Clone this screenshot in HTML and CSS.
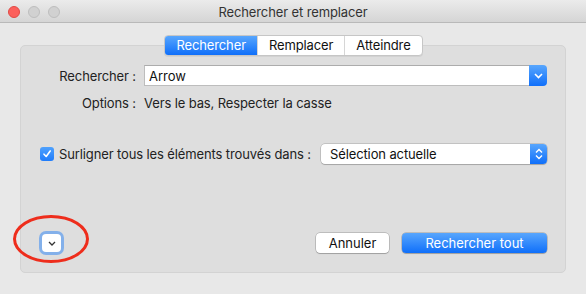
FILE: index.html
```html
<!DOCTYPE html>
<html lang="fr">
<head>
    <meta charset="UTF-8">
    <title>Rechercher et remplacer</title>
    <link rel="stylesheet" href="styles.css">
</head>
<body>
    <div class="window">
        <header class="titlebar">
            <div class="lights">
                <span class="light close"></span>
                <span class="light"></span>
                <span class="light"></span>
            </div>
            <div class="title">Rechercher et remplacer</div>
        </header>

        <section class="panel">
            <div class="tabs">
                <span class="tab active">Rechercher</span><span class="tab">Remplacer</span><span class="tab">Atteindre</span>
            </div>

            <div class="field">
                <span class="label">Rechercher :</span>
                <div class="combo">
                    <input class="combo-input" type="text" value="Arrow">
                    <span class="combo-btn">
                        <svg width="9" height="6" viewBox="0 0 9 6"><path d="M1 1l3.5 3.5L8 1" fill="none" stroke="#fff" stroke-width="1.6"/></svg>
                    </span>
                </div>
            </div>

            <div class="field options">
                <span class="label">Options :</span>
                <span class="value">Vers le bas, Respecter la casse</span>
            </div>

            <div class="highlight">
                <label class="check">
                    <span class="box">
                        <svg width="10" height="10" viewBox="0 0 10 10"><path d="M2 5.2l2.2 2.3L8.2 2" fill="none" stroke="#fff" stroke-width="1.6" stroke-linecap="round" stroke-linejoin="round"/></svg>
                    </span>
                    Surligner tous les éléments trouvés dans :
                </label>
                <div class="select">
                    <span>Sélection actuelle</span>
                    <span class="stepper">
                        <svg width="8" height="12" viewBox="0 0 8 12"><path d="M1 4.5l3-3 3 3M1 7.5l3 3 3-3" fill="none" stroke="#fff" stroke-width="1.4"/></svg>
                    </span>
                </div>
            </div>

            <div class="footer">
                <button class="disclosure">
                    <svg width="8" height="5" viewBox="0 0 8 5"><path d="M1 1l3 3 3-3" fill="none" stroke="#333" stroke-width="1.3"/></svg>
                </button>
                <span class="callout"></span>
                <div class="actions">
                    <button class="btn">Annuler</button>
                    <button class="btn primary">Rechercher tout</button>
                </div>
            </div>
        </section>
    </div>
</body>
</html>
```

FILE: styles.css
```css
:root {
    --text: #222;
    --blue-top: #58a6fd;
    --blue-bottom: #0f6ffa;
    --window: #e8e8e8;
    --panel: #dedede;
}

* {
    margin: 0;
    padding: 0;
    box-sizing: border-box;
}

body {
    font-family: 'Inter', 'Liberation Sans', sans-serif;
    font-size: 13px;
    letter-spacing: -0.12px;
    color: var(--text);
    background: var(--window);
    width: 586px;
    height: 294px;
    overflow: hidden;
}

.window {
    height: 294px;
    background: var(--window);
}

.titlebar {
    position: relative;
    height: 23px;
    background: linear-gradient(#ebebeb, #d5d5d5);
    border-bottom: 1px solid #b9b9b9;
    display: flex;
    align-items: center;
    justify-content: center;
}

.lights {
    position: absolute;
    left: 8px;
    top: 6px;
    display: flex;
    gap: 8px;
}

.light {
    width: 12px;
    height: 12px;
    border-radius: 50%;
    background: #d1d1d1;
    border: 1px solid #bebebe;
}

.light.close {
    background: #fc605c;
    border-color: #e04a45;
}

.title {
    color: #333;
    padding-top: 1px;
}

.panel {
    margin: 22px 20px 0;
    height: 228px;
    background: var(--panel);
    border: 1px solid #d3d3d3;
    border-radius: 5px;
    padding: 0 18px 19px 19px;
    display: flex;
    flex-direction: column;
}

.tabs {
    align-self: center;
    margin-top: -11px;
    display: flex;
    height: 21px;
    background: #fff;
    border: 1px solid #c6c6c6;
    border-radius: 4px;
    box-shadow: 0 1px 0 rgba(0, 0, 0, 0.05);
    overflow: hidden;
}

.tab {
    padding: 0 11px;
    line-height: 19px;
    color: #111;
    border-left: 1px solid #d6d6d6;
}

.tab:first-child {
    border-left: none;
}

.tab.active {
    background: linear-gradient(var(--blue-top), var(--blue-bottom));
    color: #fff;
}

.field {
    display: flex;
    align-items: center;
    gap: 8px;
    margin-top: 9px;
}

.label {
    width: 96px;
    text-align: right;
}

.combo {
    flex: 1;
    display: flex;
    height: 21px;
}

.combo-input {
    flex: 1;
    border: 1px solid #bdbdbd;
    border-top-color: #acacac;
    border-right: none;
    background: #fff;
    font: inherit;
    color: #111;
    padding: 0 4px;
    outline: none;
}

.combo-btn {
    width: 18px;
    display: flex;
    align-items: center;
    justify-content: center;
    background: linear-gradient(var(--blue-top), var(--blue-bottom));
    border-radius: 0 4px 4px 0;
}

.options {
    margin-top: 9px;
}

.highlight {
    display: flex;
    align-items: center;
    margin-top: 33px;
    height: 20px;
}

.check {
    display: flex;
    align-items: center;
    gap: 5px;
    white-space: nowrap;
}

.box {
    width: 14px;
    height: 14px;
    border-radius: 3px;
    background: linear-gradient(#4fa1fd, #1f7cfb);
    display: flex;
    align-items: center;
    justify-content: center;
}

.select {
    margin-left: auto;
    width: 226px;
    height: 20px;
    display: flex;
    align-items: center;
    background: #fff;
    border-radius: 4px;
    box-shadow: 0 0 0 0.5px rgba(0, 0, 0, 0.25), 0 1px 1px rgba(0, 0, 0, 0.15);
    padding-left: 9px;
    overflow: hidden;
    color: #111;
}

.select span:first-child {
    flex: 1;
}

.stepper {
    width: 17px;
    height: 100%;
    display: flex;
    align-items: center;
    justify-content: center;
    background: linear-gradient(var(--blue-top), var(--blue-bottom));
}

.footer {
    margin-top: auto;
    display: flex;
    align-items: center;
    position: relative;
    height: 20px;
}

.disclosure {
    margin-left: 2px;
    width: 19px;
    height: 18px;
    background: #fff;
    border: none;
    border-radius: 4px;
    box-shadow: 0 0 0 3px rgba(92, 156, 240, 0.7);
    display: flex;
    align-items: center;
    justify-content: center;
}

/* red annotation around the disclosure button */
.callout {
    position: absolute;
    left: -27px;
    top: -18px;
    width: 76px;
    height: 48px;
    border: 3px solid #ee2d1c;
    border-radius: 50%;
}

.actions {
    margin-left: auto;
    display: flex;
    gap: 13px;
}

.btn {
    font: inherit;
    height: 20px;
    width: 73px;
    background: #fff;
    color: #111;
    border: none;
    border-radius: 4px;
    box-shadow: 0 0 0 0.5px rgba(0, 0, 0, 0.3), 0 1px 1px rgba(0, 0, 0, 0.15);
}

.btn.primary {
    width: 145px;
    background: linear-gradient(var(--blue-top), var(--blue-bottom));
    color: #fff;
}
```
